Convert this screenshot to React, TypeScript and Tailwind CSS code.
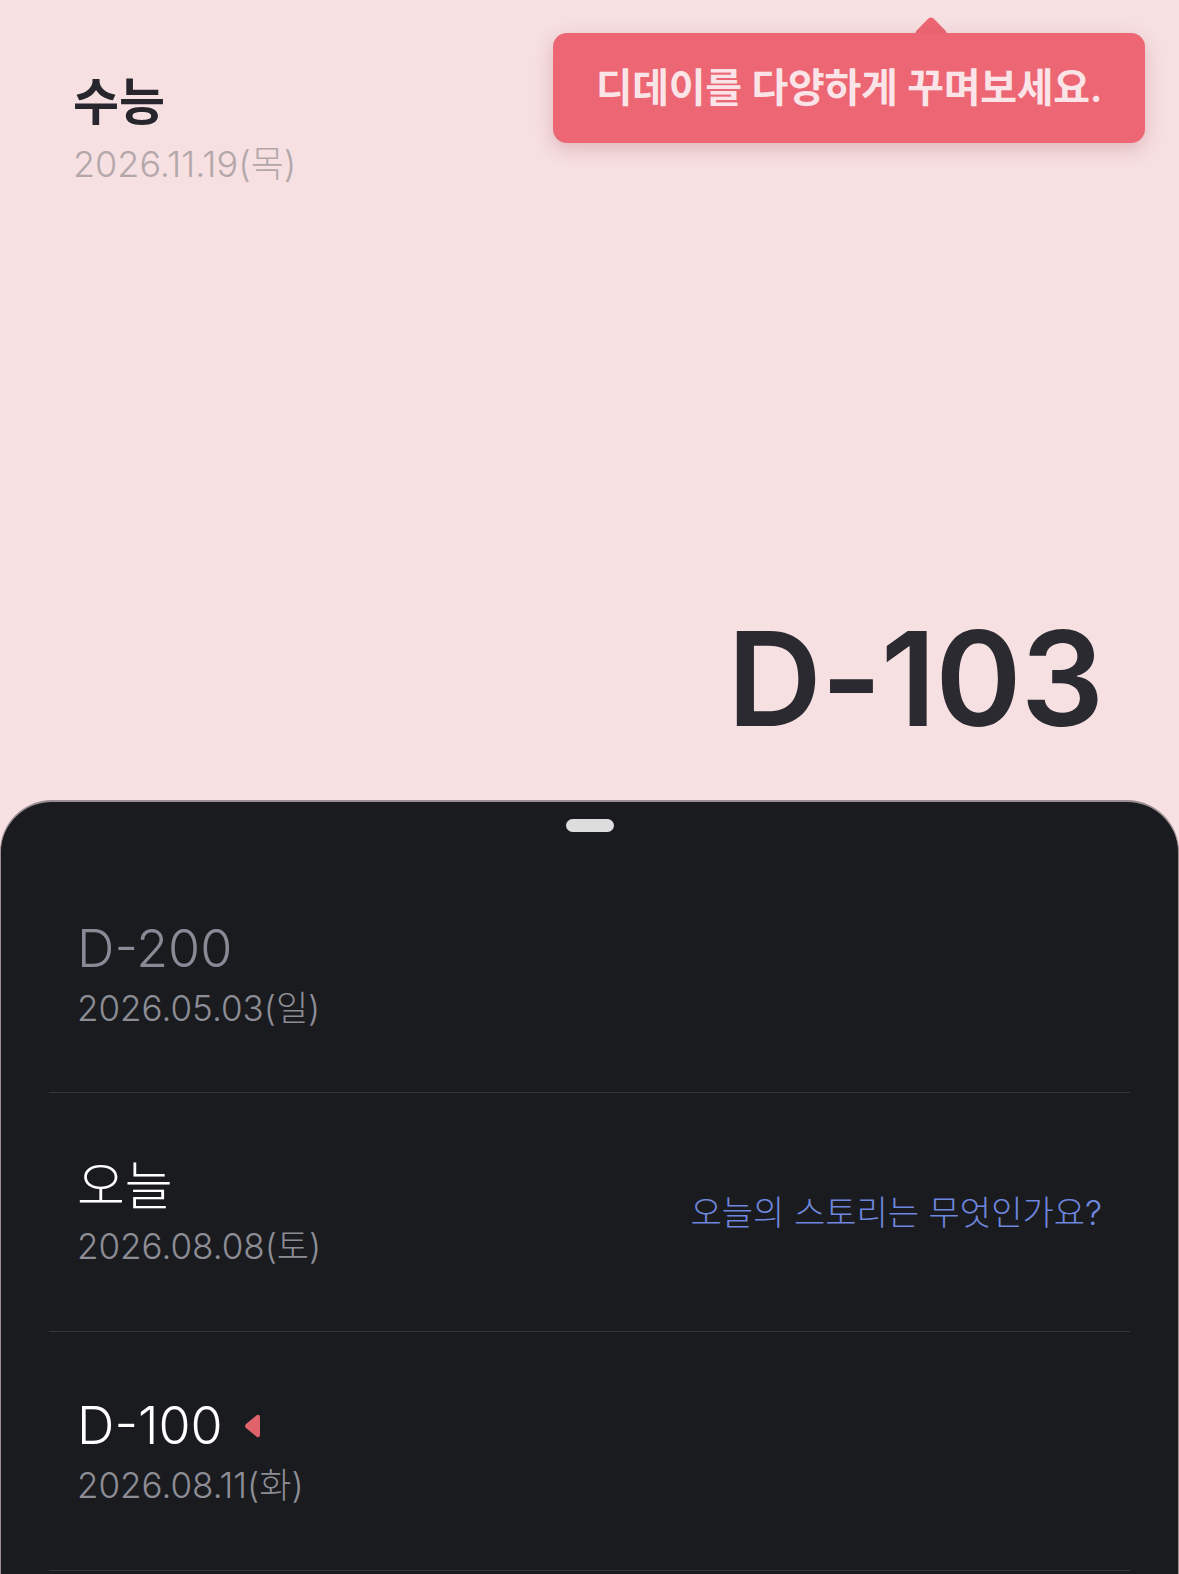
import React from "react";

const font = { fontFamily: "Inter, 'Noto Sans CJK KR', sans-serif" };

interface Row {
  title: string;
  date: string;
  dim?: boolean;
  note?: string;
  marker?: boolean;
}

const rows: Row[] = [
  { title: "D-200", date: "2026.05.03(일)", dim: true },
  { title: "오늘", date: "2026.08.08(토)", note: "오늘의 스토리는 무엇인가요?" },
  { title: "D-100", date: "2026.08.11(화)", marker: true },
];

function Tooltip() {
  return (
    <div className="absolute left-[553px] top-[33px] w-[592px] h-[110px]">
      <div className="absolute left-[366px] -top-[12px] w-[24px] h-[24px] rotate-45 rounded-[4px] bg-[#ec6673]" />
      <div className="relative h-full rounded-[14px] bg-[#ec6673] shadow-[0_6px_18px_rgba(160,60,70,0.25)] flex items-center justify-center">
        <span className="text-[40px] font-semibold text-[#fbe4e8] tracking-[-0.3px]">디데이를 다양하게 꾸며보세요.</span>
      </div>
    </div>
  );
}

export default function App() {
  return (
    <div className="relative w-[1179px] h-[1574px] overflow-hidden bg-[#f6e0e2]" style={font}>
      <div className="h-[800px] flex flex-col px-[73px] pt-[72px]">
        <div className="text-[50px] font-bold leading-[60px] text-[#26262c]">수능</div>
        <div className="text-[36px] font-light leading-[46px] text-[#b3a7aa] mt-[9px]">2026.11.19(목)</div>
        <div className="flex-1 flex items-end justify-end pr-[76px] pb-[56px] -mr-[73px]">
          <div className="text-[131px] font-semibold leading-none tracking-[-1px] text-[#2a2a30]">D-103</div>
        </div>
      </div>

      <div className="h-[774px] rounded-t-[52px] bg-[#1a1b1f] border-t-2 border-x border-[#9a8e92]">
        <div className="flex justify-center pt-[17px]">
          <div className="w-[48px] h-[13px] rounded-full bg-[#dddddd]" />
        </div>
        <div className="mx-12 mt-[24px]">
          {rows.map((r) => (
            <div key={r.date} className="h-[239px] border-b border-[#34353a] flex items-center justify-between px-7 first:h-[237px]">
              <div className="flex flex-col">
                <div className="flex items-center gap-[20px]">
                  <span className={`text-[52px] font-light leading-[62px] ${r.dim ? "text-[#8a8a96]" : "text-white"}`}>{r.title}</span>
                  {r.marker && (
                    <svg width="18" height="26" viewBox="0 0 18 26">
                      <path d="M14 2 Q17 1 17 5 L17 21 Q17 25 14 24 L3 15 Q1 13 3 11 Z" fill="#e0636b" />
                    </svg>
                  )}
                </div>
                <span className="text-[35px] font-light leading-[44px] text-[#8d8d96] mt-[6px]">{r.date}</span>
              </div>
              {r.note && <span className="text-[34px] font-light text-[#6f87df]">{r.note}</span>}
            </div>
          ))}
        </div>
      </div>

      <Tooltip />
    </div>
  );
}
